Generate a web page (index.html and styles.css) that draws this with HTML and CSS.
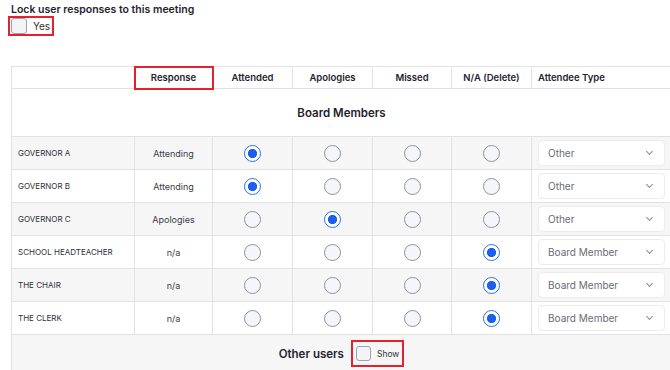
FILE: index.html
```html
<!DOCTYPE html>
<html lang="en">
<head>
<meta charset="UTF-8">
<title>Meeting attendance</title>
<link rel="stylesheet" href="styles.css">
</head>
<body>
<div class="lock">
  <div class="lock-title">Lock user responses to this meeting</div>
  <label class="check-label lock-box">
    <span class="checkbox"></span>
    <span>Yes</span>
  </label>
</div>

<table class="attendance">
  <colgroup>
    <col class="c-name"><col class="c-resp"><col class="c-opt"><col class="c-opt"><col class="c-opt2"><col class="c-opt"><col class="c-type">
  </colgroup>
  <thead>
    <tr>
      <th></th>
      <th class="highlight">Response</th>
      <th>Attended</th>
      <th>Apologies</th>
      <th>Missed</th>
      <th>N/A (Delete)</th>
      <th class="left">Attendee Type</th>
    </tr>
  </thead>
  <tbody>
    <tr class="section"><td colspan="7">Board Members</td></tr>
    <tr class="alt">
      <td class="name">GOVERNOR A</td><td class="resp">Attending</td>
      <td><span class="radio on"></span></td><td><span class="radio"></span></td><td><span class="radio"></span></td><td><span class="radio"></span></td>
      <td class="type"><div class="select">Other<span class="chev"></span></div></td>
    </tr>
    <tr>
      <td class="name">GOVERNOR B</td><td class="resp">Attending</td>
      <td><span class="radio on"></span></td><td><span class="radio"></span></td><td><span class="radio"></span></td><td><span class="radio"></span></td>
      <td class="type"><div class="select">Other<span class="chev"></span></div></td>
    </tr>
    <tr class="alt">
      <td class="name">GOVERNOR C</td><td class="resp">Apologies</td>
      <td><span class="radio"></span></td><td><span class="radio on"></span></td><td><span class="radio"></span></td><td><span class="radio"></span></td>
      <td class="type"><div class="select">Other<span class="chev"></span></div></td>
    </tr>
    <tr>
      <td class="name">SCHOOL HEADTEACHER</td><td class="resp">n/a</td>
      <td><span class="radio"></span></td><td><span class="radio"></span></td><td><span class="radio"></span></td><td><span class="radio on"></span></td>
      <td class="type"><div class="select">Board Member<span class="chev"></span></div></td>
    </tr>
    <tr class="alt">
      <td class="name">THE CHAIR</td><td class="resp">n/a</td>
      <td><span class="radio"></span></td><td><span class="radio"></span></td><td><span class="radio"></span></td><td><span class="radio on"></span></td>
      <td class="type"><div class="select">Board Member<span class="chev"></span></div></td>
    </tr>
    <tr>
      <td class="name">THE CLERK</td><td class="resp">n/a</td>
      <td><span class="radio"></span></td><td><span class="radio"></span></td><td><span class="radio"></span></td><td><span class="radio on"></span></td>
      <td class="type"><div class="select">Board Member<span class="chev"></span></div></td>
    </tr>
    <tr class="section other">
      <td colspan="7">
        <div class="other-wrap">
          <span>Other users</span>
          <label class="check-label show-box">
            <span class="checkbox"></span>
            <span class="show-text">Show</span>
          </label>
        </div>
      </td>
    </tr>
  </tbody>
</table>
</body>
</html>
```

FILE: styles.css
```css
html, body {
    margin: 0;
    overflow: hidden;
}
body {
    width: 700px;
    padding: 3px 0 0 11px;
    font-family: Inter, "Noto Sans", sans-serif;
    color: #1f2330;
    background: #fff;
}
.lock-title {
    font-size: 10.5px;
    font-weight: 600;
    line-height: 13px;
}
.check-label {
    display: inline-flex;
    align-items: center;
    gap: 6px;
    font-size: 10px;
    color: #333;
}
.lock-box {
    margin: 0 0 0 -3px;
    padding: 0 2px 0 1px;
    border: 2px solid #e3222b;
}
.checkbox {
    display: inline-block;
    box-sizing: border-box;
    width: 16px;
    height: 16px;
    border: 1.5px solid #9ea3ad;
    border-radius: 3px;
    background: #f3f4f8;
}
.attendance {
    margin-top: 28px;
    width: 660px;
    border-collapse: collapse;
    table-layout: fixed;
    font-size: 9px;
}
.c-name { width: 123px; }
.c-resp { width: 78px; }
.c-opt { width: 80px; }
.c-opt2 { width: 79px; }
.c-type { width: 140px; }
.attendance th,
.attendance td {
    border: 1px solid #e2e2e4;
    text-align: center;
    padding: 0;
}
.attendance th {
    height: 21px;
    font-size: 9.5px;
    font-weight: 600;
    color: #1f2330;
}
.attendance th.left {
    text-align: left;
    padding-left: 6px;
}
.attendance th.highlight {
    outline: 2px solid #e3222b;
    outline-offset: -1px;
}
.attendance tbody tr {
    height: 33px;
}
.attendance tr.alt td {
    background: #f6f6f7;
}
.section td {
    height: 47px;
    font-size: 11.5px;
    font-weight: 600;
    color: #1f2330;
}
.section.other td {
    background: #f6f6f7;
    height: 40px;
    vertical-align: top;
}
.other-wrap {
    display: flex;
    justify-content: center;
    align-items: center;
    gap: 7px;
    padding-top: 5px;
}
.show-box {
    padding: 4px 3px;
    border: 2px solid #e3222b;
    font-size: 8.5px;
    font-weight: 400;
}
.show-box .checkbox {
    width: 15px;
    height: 15px;
}
.name {
    text-align: left !important;
    padding-left: 6px !important;
    font-size: 8px;
    color: #2e313a;
}
.resp {
    font-size: 9px;
    color: #3a3d46;
}
.radio {
    display: inline-block;
    box-sizing: border-box;
    width: 17px;
    height: 17px;
    border: 1.3px solid #8e939c;
    border-radius: 50%;
    background: #f5f6f9;
    vertical-align: middle;
}
.radio.on {
    border: 1.5px solid #2a6ef5;
    background: radial-gradient(circle, #1a5ff0 0 4.3px, #fff 4.8px);
}
.type {
    padding: 0 6px !important;
}
.select {
    display: flex;
    align-items: center;
    justify-content: space-between;
    height: 24px;
    padding: 0 12px 0 9px;
    border: 1px solid #ececef;
    border-radius: 4px;
    background: #fff;
    font-size: 10px;
    color: #6a6d75;
    text-align: left;
}
.chev {
    width: 4px;
    height: 4px;
    border-right: 1px solid #8a8d94;
    border-bottom: 1px solid #8a8d94;
    transform: rotate(45deg);
    margin-top: -3px;
}
```
